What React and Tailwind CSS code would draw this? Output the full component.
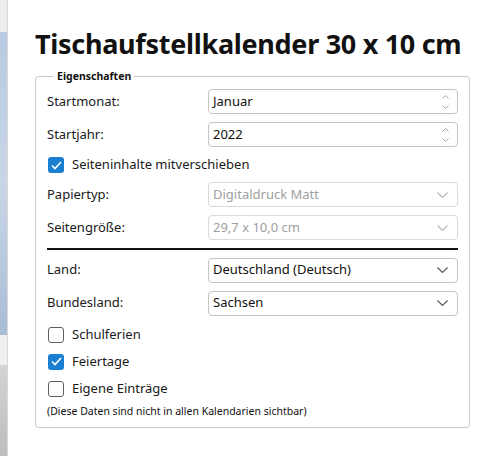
import React from "react";

const font = { fontFamily: '"Noto Sans", "Open Sans", sans-serif' };

const Spin = () => (
  <div className="flex flex-col items-center justify-center gap-[6px] pr-[8px] text-[#a6a6a6]">
    <svg width="7" height="4" viewBox="0 0 7 4" fill="none" stroke="currentColor" strokeWidth="1">
      <path d="M0.5 3.5 L3.5 0.5 L6.5 3.5" />
    </svg>
    <svg width="7" height="4" viewBox="0 0 7 4" fill="none" stroke="currentColor" strokeWidth="1">
      <path d="M0.5 0.5 L3.5 3.5 L6.5 0.5" />
    </svg>
  </div>
);

const Chevron = ({ disabled }) => (
  <svg
    width="11"
    height="6"
    viewBox="0 0 11 6"
    fill="none"
    stroke={disabled ? "#b4b4b4" : "#555"}
    strokeWidth="1.1"
    className="mr-[9px]"
  >
    <path d="M0.5 0.5 L5.5 5.5 L10.5 0.5" />
  </svg>
);

const Field = ({ label, value, kind, disabled }) => (
  <div className="flex items-center h-[25px]">
    <div className="w-[161px] text-[13px] text-[#1a1a1a]">{label}</div>
    <div
      className={
        "flex-1 h-[25px] flex items-center justify-between rounded-[4px] border " +
        (disabled ? "border-[#d9d9d9] bg-white" : "border-[#c4c4c4] bg-white")
      }
    >
      <span
        className={
          "pl-[4px] text-[13px] " + (disabled ? "text-[#a0a0a0]" : "text-[#111]")
        }
      >
        {value}
      </span>
      {kind === "spin" ? <Spin /> : <Chevron disabled={disabled} />}
    </div>
  </div>
);

const Check = ({ label, checked }) => (
  <div className="flex items-center gap-[8px] h-[20px]">
    {checked ? (
      <div className="w-[16px] h-[16px] rounded-[3px] bg-[#1a7fd0] flex items-center justify-center">
        <svg width="11" height="9" viewBox="0 0 11 9" fill="none" stroke="white" strokeWidth="1.6">
          <path d="M1 4.5 L4 7.5 L10 1" />
        </svg>
      </div>
    ) : (
      <div className="w-[16px] h-[16px] rounded-[3px] border border-[#5f5f5f] bg-white" />
    )}
    <span className="text-[13px] text-[#1a1a1a]">{label}</span>
  </div>
);

export default function App() {
  return (
    <div className="w-[477px] h-[456px] flex bg-white overflow-hidden" style={font}>
      <div className="w-[8px] flex flex-col border-r border-[#d8d8d8]">
        <div className="h-[32px] bg-[#ededed]" />
        <div className="h-[303px] bg-gradient-to-b from-[#b8cbe2] via-[#c9d6e6] to-[#a9bcd6]" />
        <div className="h-[30px] bg-[#f0f0f0]" />
        <div className="flex-1 bg-gradient-to-b from-[#d4d4d4] to-[#bdbdbd]" />
      </div>
      <div className="flex-1 pl-[27px] pr-[7px]">
        <h1 className="mt-[26px] text-[27px] leading-[36px] font-bold text-[#111] tracking-[-0.3px]">
          Tischaufstellkalender 30 x 10 cm
        </h1>
        <fieldset className="mt-[8px] h-[358px] border border-[#cacaca] rounded-[4px] pl-[11px] pr-[11px]">
          <legend className="ml-[7px] px-[3px] text-[10.5px] font-bold text-[#111] leading-[12px]">
            Eigenschaften
          </legend>
          <div className="flex flex-col mt-[7px]">
            <div className="flex flex-col gap-[8px]">
              <Field label="Startmonat:" value="Januar" kind="spin" />
              <Field label="Startjahr:" value="2022" kind="spin" />
            </div>
            <div className="mt-[8px] pl-[1px]">
              <Check label="Seiteninhalte mitverschieben" checked />
            </div>
            <div className="mt-[7px] flex flex-col gap-[8px]">
              <Field label="Papiertyp:" value="Digitaldruck Matt" disabled />
              <Field label="Seitengröße:" value="29,7 x 10,0 cm" disabled />
            </div>
            <div className="mt-[8px] h-[1.5px] bg-[#111]" />
            <div className="mt-[8px] flex flex-col gap-[8px]">
              <Field label="Land:" value="Deutschland (Deutsch)" />
              <Field label="Bundesland:" value="Sachsen" />
            </div>
            <div className="mt-[9px] pl-[1px] flex flex-col gap-[7px]">
              <Check label="Schulferien" />
              <Check label="Feiertage" checked />
              <Check label="Eigene Einträge" />
            </div>
            <div className="mt-[5px] text-[10.5px] text-[#111]">
              (Diese Daten sind nicht in allen Kalendarien sichtbar)
            </div>
          </div>
        </fieldset>
      </div>
    </div>
  );
}
